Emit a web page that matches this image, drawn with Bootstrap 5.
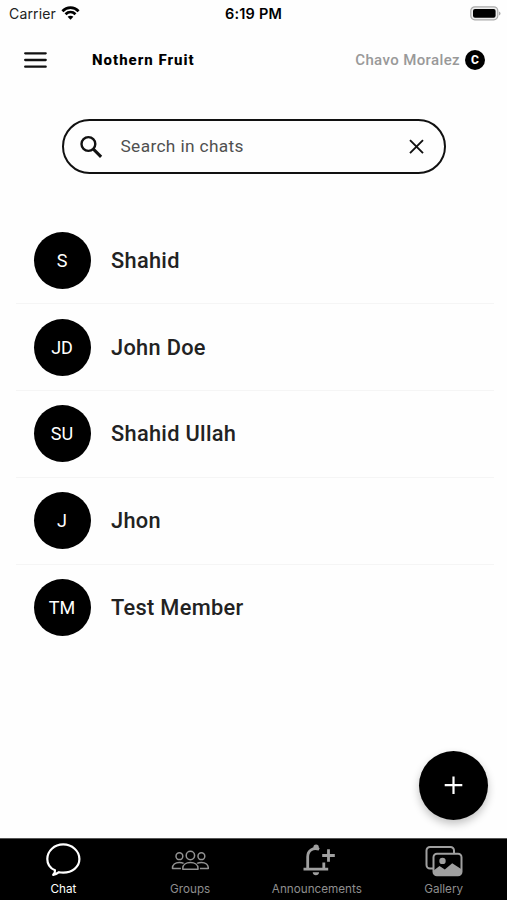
<!DOCTYPE html>
<html lang="en">
<head>
<meta charset="utf-8">
<meta name="viewport" content="width=device-width, initial-scale=1">
<title>Chats</title>
<link href="https://cdn.jsdelivr.net/npm/bootstrap@5.3.0/dist/css/bootstrap.min.css" rel="stylesheet">
<style>
  body { font-family: Roboto, "Liberation Sans", sans-serif; background: #fefefe; color: #000; }
  svg { display: block; flex: none; }
  .screen { height: 900px; overflow: hidden; }
  .status { height: 28px; padding: 0 6px 0 9px; font-family: Inter, sans-serif; font-size: 14px; line-height: 28px; }
  .status > div { flex: 1 1 0; }
  .carrier { color: #222; letter-spacing: .15px; }
  .clock { font-size: 14.5px; font-weight: 600; letter-spacing: .2px; padding-right: 3px; }
  .topbar { height: 63px; padding: 0 22px 0 24px; }
  .team { font-size: 15px; font-weight: 800; margin: 1px 0 0 45px; letter-spacing: 1px; }
  .user { font-size: 15px; font-weight: 500; color: #999; letter-spacing: .38px; padding-top: 1px; }
  .user-dot { width: 20px; height: 20px; font-size: 12px; font-weight: 800; margin-left: 5px; }
  .search { height: 55px; margin: 28px 61px 0 62px; border: 2px solid #111; border-radius: 28px; padding: 0 18px 0 14px; }
  .search-text { font-size: 17.3px; color: #505050; margin-left: 15.5px; letter-spacing: .36px; }
  .chats { margin: 43.500px 13px 0 16px; }
  .chat { height: 86.8px; padding-left: 17.5px; border-bottom: 1.5px solid #f5f5f5; }
  .chat:last-child { border-bottom-color: transparent; }
  .avatar { width: 57px; height: 57px; font-size: 18px; flex: none; }
  .chat-name { font-size: 21.8px; font-weight: 500; color: #222; margin: 1.5px 0 0 20.5px; letter-spacing: .3px; }
  .fab { width: 69px; height: 69px; margin: 0 19px 18.5px auto; box-shadow: 0 4px 9px rgba(0,0,0,.24); flex: none; }
  .tabs { height: 62px; border-top: 1px solid #555; font-family: Inter, sans-serif; font-size: 11.7px; color: #8e8e8e; }
  .tab { flex: 1 1 0; padding-top: 3px; line-height: 16px; }
  .tab svg { height: 36px; margin-bottom: 2.500px; }
  .tab-label { white-space: nowrap; }
</style>
<script src="https://cdn.jsdelivr.net/npm/bootstrap@5.3.0/dist/js/bootstrap.bundle.min.js" defer></script>
</head>
<body>
<div class="screen d-flex flex-column">
  <div class="status d-flex align-items-center">
    <div class="carrier d-flex align-items-center">Carrier
      <svg width="20" height="16" viewBox="0 0 20 16" fill="none" stroke="#000" stroke-width="2.7" class="ms-1"><path d="M2.400 5.200C7 .5 14 .5 18.600 5.200M5.500 8.300c2.900-2.800 7.100-2.800 10 0"/><path d="M10.500 13.700 7.600 10.800c1.600-1.500 4.200-1.500 5.800 0z" fill="#000" stroke="none"/></svg>
    </div>
    <div class="clock text-center">6:19 PM</div>
    <div class="d-flex justify-content-end">
      <svg width="31" height="16" viewBox="0 0 31 16"><rect x=".8" y=".8" width="27" height="13" rx="4" fill="#eee" stroke="#aaa" stroke-width="1.200"/><rect x="3" y="3" width="22.600" height="8.700" rx="2" fill="#000"/><path d="M29 5.500v4q1.500-.5 1.500-2T29 5.500z" fill="#aaa"/></svg>
    </div>
  </div>

  <header class="topbar d-flex align-items-center">
    <svg width="23" height="16" viewBox="0 0 23 16" stroke="#111" stroke-width="2.300" stroke-linecap="round"><path d="M1.200 1.300h20.500M1.200 8h20.500M1.200 14.700h20.500"/></svg>
    <span class="team">Nothern Fruit</span>
    <span class="user ms-auto">Chavo Moralez</span>
    <span class="user-dot rounded-circle bg-black text-white d-flex align-items-center justify-content-center">C</span>
  </header>

  <div class="search d-flex align-items-center">
    <svg width="27" height="28" viewBox="0 0 27 28" fill="none" stroke="#111" stroke-width="2.400"><circle cx="10.400" cy="11" r="6.900"/><path d="m15.400 16.100 7.700 7.800" stroke-width="3"/></svg>
    <span class="search-text">Search in chats</span>
    <svg class="ms-auto" width="18" height="18" viewBox="0 0 18 18" stroke="#111" stroke-width="1.900"><path d="m2 2.200 13 13m0-13-13 13"/></svg>
  </div>

  <main class="chats">
    <div class="chat d-flex align-items-center"><span class="avatar rounded-circle bg-black text-white d-flex align-items-center justify-content-center">S</span><span class="chat-name">Shahid</span></div>
    <div class="chat d-flex align-items-center"><span class="avatar rounded-circle bg-black text-white d-flex align-items-center justify-content-center">JD</span><span class="chat-name">John Doe</span></div>
    <div class="chat d-flex align-items-center"><span class="avatar rounded-circle bg-black text-white d-flex align-items-center justify-content-center">SU</span><span class="chat-name">Shahid Ullah</span></div>
    <div class="chat d-flex align-items-center"><span class="avatar rounded-circle bg-black text-white d-flex align-items-center justify-content-center">J</span><span class="chat-name">Jhon</span></div>
    <div class="chat d-flex align-items-center"><span class="avatar rounded-circle bg-black text-white d-flex align-items-center justify-content-center">TM</span><span class="chat-name">Test Member</span></div>
  </main>

  <div class="fab mt-auto rounded-circle bg-black d-flex align-items-center justify-content-center">
    <svg width="20" height="20" viewBox="0 0 20 20" stroke="#fff" stroke-width="2.200"><path d="M9.500 1.400V19M.7 10.200h17.600"/></svg>
  </div>

  <nav class="tabs d-flex bg-black">
    <div class="tab d-flex flex-column align-items-center text-white">
      <svg width="36" viewBox="0 0 36 36" fill="none" stroke="#fff" stroke-width="2.200" stroke-linejoin="round"><path d="M10 28.300C5 26.200 2.300 21.800 2.300 17 2.300 9 9.300 2.400 18.200 2.400S34.400 9 34.400 17s-7.200 13.600-16.200 13.600c-1.700 0-3-.1-4.200-.4-1.800 1.400-3.400 2.300-5.800 2.600 1.200-1.300 2.100-2.800 1.800-4.500z"/></svg>
      <span class="tab-label">Chat</span>
    </div>
    <div class="tab d-flex flex-column align-items-center">
      <svg width="38" viewBox="0 0 38 36" fill="none" stroke="#929292" stroke-width="1.500" stroke-linejoin="round"><circle cx="19.400" cy="13.500" r="4.200"/><circle cx="8.400" cy="14.200" r="3.400"/><circle cx="30.400" cy="14.200" r="3.400"/><path d="M11.800 27.300v-1c0-3.600 3.200-5.700 7.600-5.700s7.600 2.100 7.600 5.700v1zM9.900 26.500H1.500c-.2-3.800 2.700-6.100 6.900-6.100 1.700 0 3.100.3 4.200 1M28.900 26.500h8.400c.2-3.800-2.700-6.100-6.900-6.100-1.700 0-3.100.3-4.200 1"/></svg>
      <span class="tab-label">Groups</span>
    </div>
    <div class="tab d-flex flex-column align-items-center">
      <svg width="36" viewBox="0 0 36 36" fill="none" stroke="#a0a0a0" stroke-width="2.800"><path d="M20.200 7.300C14 4.800 8.700 8.700 8.700 14.700v12M4.500 27.200h24.700M24.800 20.500v7M23.200 13.500h12.600M29.500 7.300v12.500"/><path d="M14.400 6.500V5.200a2.700 2.700 0 0 1 5.400 0v1.300zM13.700 30.200h6.400c0 3.900-6.400 3.900-6.400 0z" fill="#a0a0a0" stroke="none"/></svg>
      <span class="tab-label">Announcements</span>
    </div>
    <div class="tab d-flex flex-column align-items-center">
      <svg width="38" viewBox="0 0 38 36" fill="none" stroke="#a0a0a0" stroke-width="2"><path d="M8 26.500H5A3.500 3.500 0 0 1 1.500 23V8.500A3.500 3.500 0 0 1 5 5h20.500A3.500 3.500 0 0 1 29 8.500v3"/><rect x="8.500" y="11.700" width="28" height="21.500" rx="3.500"/><circle cx="17.500" cy="18.900" r="3.200" fill="#a0a0a0" stroke="none"/><path d="m9 28.200 5.500-4.300 5.300 3.500 7.400-6.200 9.300 6v3.500q0 2.500-3 2.500H12q-3 0-3-2.500z" fill="#a0a0a0" stroke="none"/></svg>
      <span class="tab-label">Gallery</span>
    </div>
  </nav>
</div>
</body>
</html>
